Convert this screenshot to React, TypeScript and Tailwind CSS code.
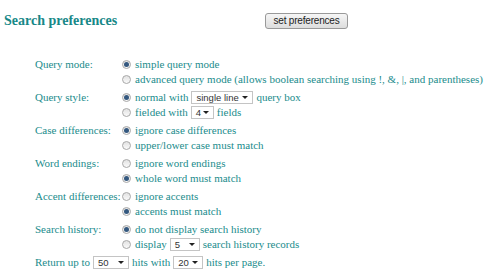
import React from 'react';

const Radio: React.FC<{ on?: boolean }> = ({ on }) => (
  <span className="w-[9px] h-[9px] rounded-full border border-[#a8a8a8] bg-gradient-to-b from-[#e2e2e2] to-[#fafafa] flex items-center justify-center shrink-0 mr-[4px]">
    {on && <span className="w-[5px] h-[5px] rounded-full bg-[#34587f]" />}
  </span>
);

const Select: React.FC<{ value: string; w: string }> = ({ value, w }) => (
  <span className={`${w} h-[13px] border border-solid border-[#c4c4c4] bg-white flex items-center justify-between pl-[4px] pr-[4px] mx-[3px] font-['Liberation_Sans',Arial,sans-serif] text-[9.5px] text-[#333] leading-none`}>
    <span>{value}</span>
    <span className="w-0 h-0 border-l-[3px] border-r-[3px] border-t-[3px] border-l-transparent border-r-transparent border-t-[#222]" />
  </span>
);

const Row: React.FC<{ on?: boolean; children: React.ReactNode }> = ({ on, children }) => (
  <div className="h-[15px] flex items-center whitespace-nowrap">
    <Radio on={on} />
    {children}
  </div>
);

const Group: React.FC<{ label: string; children: React.ReactNode }> = ({ label, children }) => (
  <div className="flex">
    <div className="w-[87px] h-[15px] flex items-center shrink-0">{label}</div>
    <div className="flex flex-col">{children}</div>
  </div>
);

export default function App() {
  return (
    <div className="w-[500px] h-[274px] bg-white overflow-hidden font-['Liberation_Serif','Times_New_Roman',serif] text-[#218c8c] text-[11px]">
      <div className="flex items-center pt-[13px] pl-[4px]">
        <div className="w-[261px] font-bold text-[14px] text-[#178888] leading-[16px]">Search preferences</div>
        <button className="w-[83px] h-[16px] rounded-[3px] border border-[#999] bg-gradient-to-b from-[#f6f6f6] to-[#dddddd] font-['Liberation_Sans',Arial,sans-serif] text-[10px] text-[#222] leading-none tracking-[-0.2px]">
          set preferences
        </button>
      </div>

      <div className="flex flex-col gap-[3px] pl-[35px] mt-[28px]">
        <Group label="Query mode:">
          <Row on>simple query mode</Row>
          <Row>advanced query mode (allows boolean searching using !, &amp;, |, and parentheses)</Row>
        </Group>
        <Group label="Query style:">
          <Row on>normal with<Select value="single line" w="w-[62px]" />query box</Row>
          <Row>fielded with<Select value="4" w="w-[23px]" />fields</Row>
        </Group>
        <Group label="Case differences:">
          <Row on>ignore case differences</Row>
          <Row>upper/lower case must match</Row>
        </Group>
        <Group label="Word endings:">
          <Row>ignore word endings</Row>
          <Row on>whole word must match</Row>
        </Group>
        <Group label="Accent differences:">
          <Row>ignore accents</Row>
          <Row on>accents must match</Row>
        </Group>
        <Group label="Search history:">
          <Row on>do not display search history</Row>
          <Row>display<Select value="5" w="w-[30px]" />search history records</Row>
        </Group>
        <div className="h-[15px] flex items-center whitespace-nowrap">
          Return up to<Select value="50" w="w-[36px]" />hits with<Select value="20" w="w-[30px]" />hits per page.
        </div>
      </div>
    </div>
  );
}
